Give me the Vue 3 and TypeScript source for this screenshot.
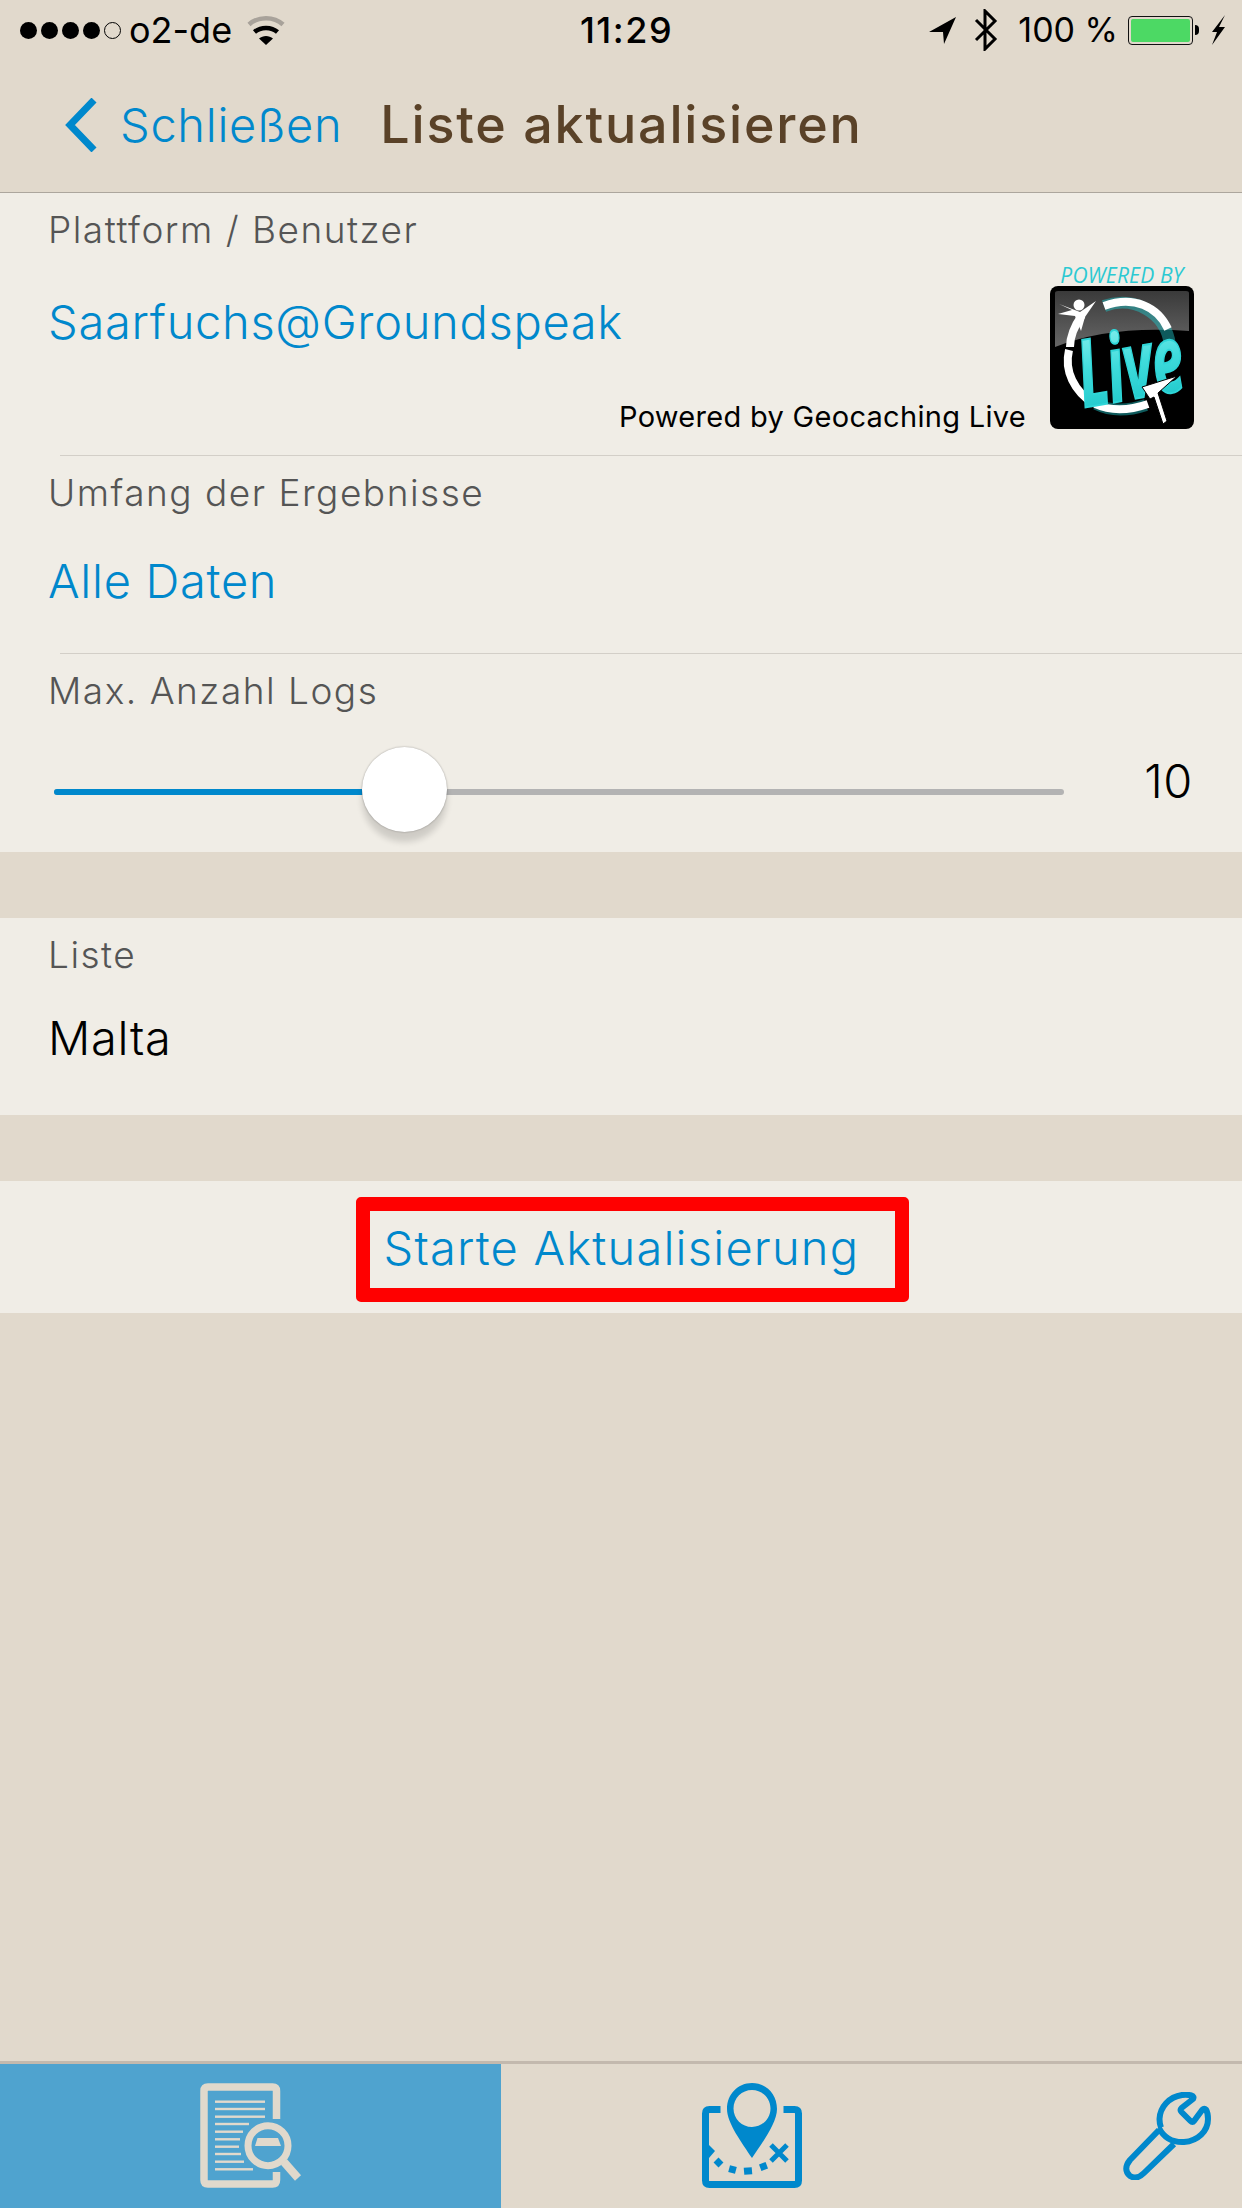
<script setup lang="ts">
import { computed, ref } from 'vue'

const maxLogs = ref(10)
const trackWidth = 1010
const thumbSize = 85

const thumbLeft = computed(() => (maxLogs.value / 30) * (trackWidth - thumbSize))

const docLines = [
  [18.7, 65],
  [26, 65],
  [33.7, 65],
  [41, 49],
  [48.7, 43],
  [56.3, 40],
  [63.7, 39],
  [71, 41],
  [78.7, 44],
  [86.3, 53],
]
</script>

<template>
  <div class="screen">
    <header class="topbar">
      <div class="status">
        <div class="status__left">
          <div class="signal">
            <span v-for="n in 4" :key="n" class="signal__dot" />
            <span class="signal__dot signal__dot--empty" />
          </div>
          <span class="carrier">o2-de</span>
          <svg class="wifi" width="38" height="30" viewBox="0 0 38 30">
            <path d="M2 9.5C11 1 27 1 36 9.5" fill="none" stroke="#a8a29a" stroke-width="4.5" />
            <path d="M7.5 17C13.5 11.5 24.5 11.5 30.5 17" fill="none" stroke="#000" stroke-width="4.5" />
            <path d="M12 23.5C16 20 22 20 26 23.5L19 30Z" fill="#000" />
          </svg>
        </div>
        <div class="clock">11:29</div>
        <div class="status__right">
          <svg class="arrow" width="27" height="27" viewBox="0 0 27 27">
            <path d="M0 15L27 0L15 27L14 15Z" fill="#000" />
          </svg>
          <svg class="bt" width="24" height="42" viewBox="0 0 24 42">
            <path d="M2 11L21 30L11 40V2L21 12L2 31" fill="none" stroke="#000" stroke-width="3" />
          </svg>
          <span class="percent">100 %</span>
          <div class="battery">
            <div class="battery__body"><div class="battery__fill" /></div>
            <div class="battery__nub" />
          </div>
          <svg class="bolt" width="16" height="30" viewBox="0 0 16 30">
            <path d="M16 0L3 17H8L3 30L16 12H10Z" fill="#000" />
          </svg>
        </div>
      </div>
      <nav class="navbar">
        <svg class="back" width="32" height="54" viewBox="0 0 32 54">
          <path d="M29 2L5 27L29 52" fill="none" stroke="#0088cc" stroke-width="7" />
        </svg>
        <span class="navbar__close">Schließen</span>
        <h1 class="navbar__title">Liste aktualisieren</h1>
      </nav>
    </header>

    <main class="content">
      <section class="panel">
        <div class="row row--account">
          <div class="row__main">
            <div class="label">Plattform / Benutzer</div>
            <div class="value value--account">Saarfuchs@Groundspeak</div>
          </div>
          <div class="powered">
            <span class="powered__text">Powered by Geocaching Live</span>
            <svg class="logo" width="144" height="168" viewBox="0 -4 144 168">
              <defs>
                <linearGradient id="logo-live" x1="0" y1="0" x2="0" y2="1">
                  <stop offset="0" stop-color="#a5f7f6" />
                  <stop offset="0.5" stop-color="#3fdcdc" />
                  <stop offset="1" stop-color="#12c0c4" />
                </linearGradient>
                <linearGradient id="logo-gloss" x1="0" y1="0" x2="0" y2="1">
                  <stop offset="0" stop-color="#3a3a3a" />
                  <stop offset="1" stop-color="#666" />
                </linearGradient>
              </defs>
              <text x="72" y="18" class="logo__caption" text-anchor="middle">POWERED BY</text>
              <rect x="0" y="21" width="144" height="143" rx="8" fill="#000" />
              <path d="M5 28Q5 26 8 26H136Q139 26 139 28V66Q60 60 5 82Z" fill="url(#logo-gloss)" />
              <g fill="none" stroke-width="12" stroke="#1fc8cc" opacity="0.45">
                <path d="M54 41C84 30 116 48 120 80" />
                <path d="M46 139C60 146 78 146 96 140" />
              </g>
              <g fill="none" stroke="#fff" stroke-width="8">
                <path d="M54 41C84 30 108 42 118 64" />
                <path d="M45 139C60 146 78 146 98 139" />
                <path d="M44 139C24 126 14 106 19 85" />
                <path d="M20 82C20 70 25 60 32 50" />
              </g>
              <circle cx="29" cy="40" r="5.500" fill="#fff" />
              <path d="M9 39L22 45L8 49L25 51L31 66L35 52L46 36L30 47Z" fill="#fff" />
              <text
                x="80"
                y="134"
                class="logo__live"
                text-anchor="middle"
                textLength="106"
                lengthAdjust="spacingAndGlyphs"
                transform="rotate(-10 80 100)"
                fill="url(#logo-live)"
                stroke="#2fd6d8"
                stroke-width="2"
              >Live</text>
              <path d="M127 111L92 122L100 134L104 132L113 159L117 156L108 128Z" fill="#fff" stroke="#000" stroke-width="1" />
            </svg>
          </div>
        </div>
        <div class="row row--scope">
          <div class="label">Umfang der Ergebnisse</div>
          <div class="value value--scope">Alle Daten</div>
        </div>
        <div class="row row--logs">
          <div class="label">Max. Anzahl Logs</div>
          <div class="slider">
            <div class="slider__track">
              <div class="slider__fill" :style="{ width: thumbLeft + 'px' }" />
              <div class="slider__thumb" :style="{ left: thumbLeft + 'px' }" />
            </div>
            <span class="slider__value">{{ maxLogs }}</span>
          </div>
        </div>
      </section>

      <section class="panel panel--list">
        <div class="label">Liste</div>
        <div class="value value--list">Malta</div>
      </section>

      <section class="panel panel--action">
        <button type="button" class="start">Starte Aktualisierung</button>
      </section>
    </main>

    <footer class="tabs">
      <div class="tab tab--active">
        <svg width="102" height="105" viewBox="0 0 102 105">
          <path
            d="M76.5 36V8Q76.5 4 72.5 4H8Q4 4 4 8V97Q4 101 8 101H72.5Q76.5 101 76.5 97V89"
            fill="none"
            stroke="#e1d9cc"
            stroke-width="7.5"
          />
          <rect v-for="line in docLines" :key="line[0]" x="15" :y="line[0] - 1.2" :width="line[1] - 15" height="2.4" fill="#e1d9cc" />
          <circle cx="68" cy="62.7" r="20" fill="none" stroke="#e1d9cc" stroke-width="7" />
          <path d="M55 63L57.5 55H78L81 63Z" fill="#e1d9cc" />
          <path d="M84 79L98 95" stroke="#e1d9cc" stroke-width="8" />
        </svg>
      </div>
      <div class="tab">
        <svg width="100" height="105" viewBox="0 0 100 105">
          <path
            d="M18.5 26.5H7.5Q3.5 26.5 3.5 30.500V97.500Q3.500 101.500 7.500 101.500H92.500Q96.500 101.500 96.500 97.500V30.500Q96.500 26.500 92.500 26.500H81.500"
            fill="none"
            stroke="#0088cc"
            stroke-width="7"
          />
          <path d="M7 62L13 68L7 75Z" fill="#0088cc" />
          <path
            fill-rule="evenodd"
            d="M50 0C36 0 25 11 25 26C25 40 40 60 50 75C60 60 75 40 75 26C75 11 64 0 50 0ZM50 7C60 7 68.500 15 68.500 25.500C68.500 36 60 44 50 44C40 44 31.500 36 31.500 25.500C31.500 15 40 7 50 7Z"
            fill="#0088cc"
          />
          <g fill="#0088cc">
            <rect x="13" y="76" width="7" height="7" transform="rotate(45 16.500 79.500)" />
            <rect x="27" y="83" width="7" height="7" transform="rotate(15 30.500 86.500)" />
            <rect x="42" y="84.500" width="8" height="7" transform="rotate(-5 46 88)" />
            <rect x="58" y="80" width="7" height="7" transform="rotate(-20 61.500 83.500)" />
          </g>
          <path d="M69 62L85 78M85 62L69 78" stroke="#0088cc" stroke-width="5" />
        </svg>
      </div>
      <div class="tab tab--clipped">
        <svg width="88" height="88" viewBox="0 0 88 88">
          <path
            d="M36 36C41 46 50 50.500 61 50C75 49 85 39 85 27C85 23 84.500 20 83 17.500C82 16.500 80.500 16.500 79.500 17.500L71 29Q69.500 31 67.500 29L58.500 20Q56.500 18 58.500 16L70 7C71 5.500 70.500 4 68.500 3.500C65 2.500 62 2.500 59 3C46 5 37 15 36.500 27C36.500 30 37 33 38 35.500"
            fill="none"
            stroke="#0088cc"
            stroke-width="6"
            stroke-linejoin="round"
          />
          <path
            d="M36 38L7 68C2 74 2 80 7 84C12 87 17 85 21 81L51 52"
            fill="none"
            stroke="#0088cc"
            stroke-width="6"
          />
        </svg>
      </div>
    </footer>
  </div>
</template>

<style scoped>
.screen {
  display: flex;
  flex-direction: column;
  width: 1242px;
  height: 2208px;
  overflow: hidden;
  background: #e1d9cc;
  color: #000;
  font-family: Inter, "Liberation Sans", sans-serif;
}

.topbar {
  height: 193px;
  border-bottom: 1px solid #aca69d;
  box-sizing: border-box;
}

.status {
  display: grid;
  grid-template-columns: 1fr auto 1fr;
  align-items: center;
  height: 60px;
  padding: 0 17px 0 20px;
}

.status__left,
.status__right {
  display: flex;
  align-items: center;
}

.status__right {
  justify-content: flex-end;
}

.signal {
  display: flex;
  gap: 4px;
}

.signal__dot {
  width: 17px;
  height: 17px;
  border-radius: 50%;
  background: #000;
  box-sizing: border-box;
}

.signal__dot--empty {
  background: transparent;
  border: 1px solid #000;
}

.carrier {
  margin-left: 8px;
  font-size: 36px;
  line-height: 60px;
}

.wifi {
  margin-left: 15px;
}

.clock {
  padding-left: 8px;
  font-size: 36px;
  font-weight: 500;
  line-height: 60px;
  letter-spacing: 1.5px;
}

.bt {
  margin-left: 18px;
}

.percent {
  margin-left: 20px;
  font-size: 34px;
  line-height: 60px;
}

.battery {
  display: flex;
  align-items: center;
  margin-left: 10px;
}

.battery__body {
  width: 65px;
  height: 29px;
  padding: 2px;
  border: 1px solid #111;
  border-radius: 4px;
  box-sizing: border-box;
}

.battery__fill {
  height: 100%;
  border-radius: 2px;
  background: #4cd964;
}

.battery__nub {
  width: 4px;
  height: 10px;
  margin-left: 2px;
  border-radius: 0 4px 4px 0;
  background: #000;
}

.bolt {
  margin-left: 10px;
}

.navbar {
  display: flex;
  align-items: center;
  height: 132px;
  padding-left: 65px;
  padding-bottom: 3px;
  box-sizing: border-box;
}

.navbar__close {
  margin-left: 23px;
  color: #0088cc;
  font-size: 47px;
  font-weight: 350;
  letter-spacing: 0.7px;
}

.navbar__title {
  margin: 0 0 0 38px;
  color: #5a4228;
  font-size: 52px;
  font-weight: 500;
  letter-spacing: 1.8px;
}

.content {
  flex: 1;
  display: flex;
  flex-direction: column;
  gap: 66px;
}

.panel {
  background: #f0ede6;
}

.row {
  position: relative;
  padding: 15px 0 0 48px;
  box-sizing: border-box;
}

.row--account {
  display: flex;
  justify-content: space-between;
  height: 263px;
  padding-right: 48px;
}

.row__main {
  min-width: 0;
}

.row--scope {
  height: 198px;
}

.row--logs {
  height: 198px;
}

.row--account::after,
.row--scope::after {
  content: "";
  position: absolute;
  left: 60px;
  right: 0;
  bottom: 0;
  height: 1px;
  background: #d3cfc8;
}

.label {
  color: #555;
  font-size: 37px;
  font-weight: 350;
  line-height: 44px;
  letter-spacing: 1.5px;
}

.value {
  color: #0088cc;
  font-size: 47px;
  font-weight: 350;
  line-height: 60px;
  letter-spacing: 0.7px;
  white-space: nowrap;
}

.value--account {
  margin-top: 40px;
}

.value--scope {
  margin-top: 36px;
}

.powered {
  flex: none;
  display: flex;
  align-items: flex-end;
  height: 236px;
  margin-top: -15px;
}

.powered__text {
  margin-right: 24px;
  margin-bottom: -8px;
  font-size: 29px;
  line-height: 40px;
  letter-spacing: 0.3px;
  white-space: nowrap;
}

.logo {
  overflow: visible;
}

.logo__caption {
  fill: #2cc9d2;
  font-size: 21px;
  font-style: italic;
  font-family: "Open Sans", sans-serif;
  letter-spacing: 0.2px;
}

.logo__live {
  font-family: "Open Sans", sans-serif;
  font-size: 94px;
  font-weight: 700;
  font-style: italic;
}

.slider {
  display: flex;
  align-items: flex-start;
  margin: 38px 0 0 6px;
}

.slider__track {
  position: relative;
  width: 1010px;
  height: 6px;
  margin-top: 38px;
  border-radius: 3px;
  background: #b3b3b3;
}

.slider__fill {
  height: 100%;
  border-radius: 3px 0 0 3px;
  background: #0088cc;
}

.slider__thumb {
  position: absolute;
  top: -42px;
  width: 85px;
  height: 85px;
  border-radius: 50%;
  background: #fff;
  box-shadow: 0 0 2px rgba(0, 0, 0, 0.35), 0 10px 6px rgba(0, 0, 0, 0.14);
}

.slider__value {
  margin-left: auto;
  padding-right: 49px;
  font-size: 47px;
  font-weight: 350;
  line-height: 60px;
  letter-spacing: 0.6px;
}

.panel--list {
  height: 197px;
  padding: 15px 0 0 48px;
  box-sizing: border-box;
}

.value--list {
  margin-top: 31px;
  color: #000;
}

.panel--action {
  display: flex;
  justify-content: center;
  height: 132px;
  padding: 16px 0 0 22px;
  box-sizing: border-box;
}

.start {
  width: 553px;
  height: 105px;
  margin: 0;
  padding: 0 0 5px 14px;
  border: 14px solid #f00;
  border-radius: 5px;
  background: transparent;
  color: #0088cc;
  font: inherit;
  font-size: 47px;
  font-weight: 350;
  letter-spacing: 1.2px;
  line-height: 1;
  text-align: left;
  box-sizing: border-box;
}

.tabs {
  display: grid;
  grid-template-columns: 501px 501px 240px;
  height: 147px;
  border-top: 3px solid #c3b9ae;
  box-sizing: border-box;
}

.tab {
  display: flex;
  justify-content: center;
  padding-top: 19px;
}

.tab--active {
  background: #4fa3cf;
}

.tab--clipped {
  justify-content: flex-start;
  padding: 28px 0 0 121px;
}
</style>

<style>
body {
  margin: 0;
}
</style>
